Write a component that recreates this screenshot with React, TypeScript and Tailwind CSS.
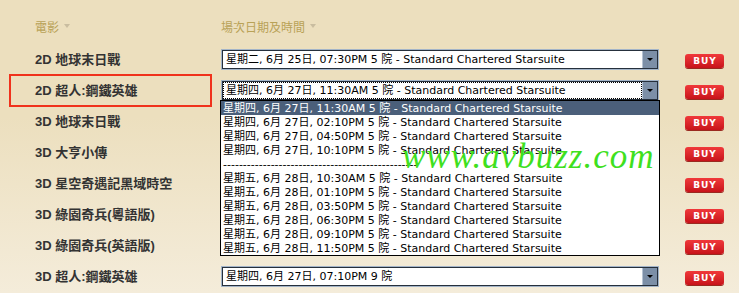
const sans = "font-['DejaVu_Sans','Noto_Sans_CJK_TC',sans-serif]";

const movies = [
  { title: "2D 地球末日戰", time: "星期二, 6月 25日, 07:30PM 5 院 - Standard Chartered Starsuite" },
  { title: "2D 超人:鋼鐵英雄", time: "星期四, 6月 27日, 11:30AM 5 院 - Standard Chartered Starsuite", open: true },
  { title: "3D 地球末日戰" },
  { title: "3D 大亨小傳" },
  { title: "3D 星空奇遇記黑域時空" },
  { title: "3D 綠園奇兵(粵語版)" },
  { title: "3D 綠園奇兵(英語版)" },
  { title: "3D 超人:鋼鐵英雄", time: "星期四, 6月 27日, 07:10PM 9 院" },
];

const options = [
  "星期四, 6月 27日, 11:30AM 5 院 - Standard Chartered Starsuite",
  "星期四, 6月 27日, 02:10PM 5 院 - Standard Chartered Starsuite",
  "星期四, 6月 27日, 04:50PM 5 院 - Standard Chartered Starsuite",
  "星期四, 6月 27日, 10:10PM 5 院 - Standard Chartered Starsuite",
  "-------------------------------------------------",
  "星期五, 6月 28日, 10:30AM 5 院 - Standard Chartered Starsuite",
  "星期五, 6月 28日, 01:10PM 5 院 - Standard Chartered Starsuite",
  "星期五, 6月 28日, 03:50PM 5 院 - Standard Chartered Starsuite",
  "星期五, 6月 28日, 06:30PM 5 院 - Standard Chartered Starsuite",
  "星期五, 6月 28日, 09:10PM 5 院 - Standard Chartered Starsuite",
  "星期五, 6月 28日, 11:50PM 5 院 - Standard Chartered Starsuite",
];

function SortArrow() {
  return (
    <span className="inline-block ml-[5px] mb-[2px] border-x-[3px] border-x-transparent border-t-[4px] border-t-[#c9bda0]" />
  );
}

function Select({ text, focused }: { text: string; focused?: boolean }) {
  return (
    <div className="relative w-[438px] h-[21px] border border-[#a3b4c8] bg-white">
      <div className="h-full flex border border-[#26303c]">
        <div
          className={
            "flex-1 flex items-center pl-[2px] border border-dotted " +
            (focused ? "border-black" : "border-transparent")
          }
        >
          <span className={`${sans} text-[11px] leading-none text-black whitespace-pre`}>{text}</span>
        </div>
        <div className="w-[15px] bg-[#7c8fa7] border-l border-[#b6c3d3] flex items-center justify-center">
          <span className="border-x-[3px] border-x-transparent border-t-[3px] border-t-black" />
        </div>
      </div>
      {focused && (
        <div className="absolute left-[-2px] top-full w-[440px] border border-black bg-white z-10">
          {options.map((o, i) => (
            <div
              key={i}
              className={
                `${sans} h-[14px] flex items-center pl-[2px] text-[11px] leading-none whitespace-pre ` +
                (i === 0 ? "bg-[#4b5f7a] text-white" : "text-black")
              }
            >
              {o}
            </div>
          ))}
        </div>
      )}
    </div>
  );
}

function BuyButton() {
  return (
    <div className="mt-[3px] ml-[26px] w-[39px] h-[14px] rounded-[3px] bg-gradient-to-b from-[#f0383a] to-[#c8121a] shadow-[0_1px_0_#9a2a20] flex items-center justify-center">
      <span className="font-['DejaVu_Sans',sans-serif] font-bold text-[9px] leading-none tracking-[1px] text-white pl-[1px]">
        BUY
      </span>
    </div>
  );
}

export default function App() {
  return (
    <div className="relative w-[739px] h-[293px] overflow-hidden bg-[linear-gradient(to_bottom,#ecdfbe_0%,#ecdfbe_40%,#f4ecda_100%)] pt-[17px]">
      <div className="flex h-[20px] items-center font-['Noto_Sans_CJK_TC',sans-serif] text-[12px] text-[#b9a257]">
        <div className="w-[221px] pl-[35px] flex items-center">
          電影
          <SortArrow />
        </div>
        <div className="flex items-center">
          場次日期及時間
          <SortArrow />
        </div>
      </div>

      <div className="mt-[7px]">
        {movies.map((m, i) => (
          <div key={i} className="relative flex h-[31px] items-center">
            {m.open && (
              <div className="absolute left-[9px] top-[-1px] w-[203px] h-[33px] border-2 border-[#f0321c]" />
            )}
            <div className="w-[221px] pl-[35px] font-['Liberation_Sans','Noto_Sans_CJK_TC',sans-serif] font-bold text-[13px] text-[#333333]">
              {m.title}
            </div>
            {m.time ? <Select text={m.time} focused={m.open} /> : <div className="w-[438px]" />}
            <BuyButton />
          </div>
        ))}
      </div>

      {/* watermark */}
      <div className="absolute left-[402px] top-[139px] z-20 font-['Liberation_Serif',serif] italic text-[35px] leading-none text-[#3fe01e] tracking-[1px]">
        www.avbuzz.com
      </div>
    </div>
  );
}
